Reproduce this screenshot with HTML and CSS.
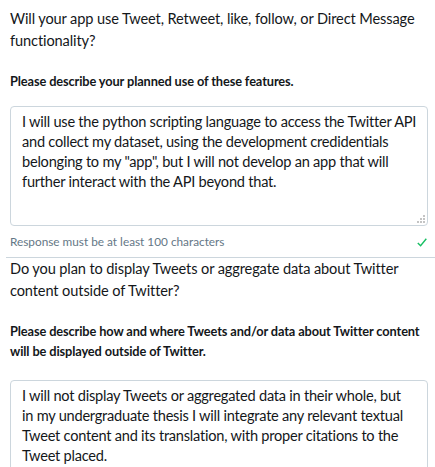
FILE: index.html
```html
<!DOCTYPE html>
<html lang="en">
<head>
<meta charset="utf-8">
<link rel="stylesheet" href="styles.css">
</head>
<body>
<div class="page">
  <section class="field">
    <p class="question">Will your app use Tweet, Retweet, like, follow, or Direct Message functionality?</p>
    <p class="prompt">Please describe your planned use of these features.</p>
    <div class="textarea tall">I will use the python scripting language to access the Twitter API<br>and collect my dataset, using the development credidentials<br>belonging to my "app", but I will not develop an app that will<br>further interact with the API beyond that.
      <svg class="grip" width="9" height="9" viewBox="0 0 9 9"><rect x="7" y="1" width="2" height="2"/><rect x="4" y="4" width="2" height="2"/><rect x="7" y="4" width="2" height="2"/><rect x="1" y="7" width="2" height="2"/><rect x="4" y="7" width="2" height="2"/><rect x="7" y="7" width="2" height="2"/></svg>
    </div>
    <div class="helper">
      <span>Response must be at least 100 characters</span>
      <svg class="check" width="10" height="9" viewBox="0 0 10 9"><polyline points="0.8,5 3.6,7.8 9.3,0.8" fill="none" stroke="#17bf63" stroke-width="1.4"/></svg>
    </div>
  </section>
  <hr class="divider">
  <section class="field">
    <p class="question">Do you plan to display Tweets or aggregate data about Twitter content outside of Twitter?</p>
    <p class="prompt">Please describe how and where Tweets and/or data about Twitter content will be displayed outside of Twitter.</p>
    <div class="textarea">I will not display Tweets or aggregated data in their whole, but<br>in my undergraduate thesis I will integrate any relevant textual<br>Tweet content and its translation, with proper citations to the<br>Tweet placed.</div>
  </section>
</div>
</body>
</html>
```
FILE: styles.css
```css
html, body {
  margin: 0;
  padding: 0;
  background: #ffffff;
}
body {
  font-family: Lato, "Noto Sans", sans-serif;
  color: #14171a;
  overflow: hidden;
}
.page {
  padding: 8px 7px 0 10px;
}
.field {
  display: flex;
  flex-direction: column;
}
.question {
  margin: 0;
  font-size: 14.6px;
  letter-spacing: -0.12px;
  line-height: 22px;
}
.prompt {
  margin: 19px 0 0;
  font-size: 12.8px;
  letter-spacing: -0.12px;
  font-weight: 700;
  line-height: 20px;
}
.textarea {
  position: relative;
  margin-top: 15px;
  border: 1px solid #ccd6dd;
  border-radius: 4px;
  padding: 5px 11px;
  font-size: 14.6px;
  letter-spacing: -0.24px;
  line-height: 20px;
  height: 108px;
  white-space: nowrap;
}
.field:last-child .textarea {
  margin-top: 19px;
  height: 120px;
}
.grip {
  position: absolute;
  right: 2px;
  bottom: 2px;
  fill: #c4c4c4;
}
.helper {
  display: flex;
  justify-content: space-between;
  align-items: center;
  margin-top: 7px;
  font-size: 11.8px;
  line-height: 18px;
  color: #657786;
}
.check {
  margin-right: 1px;
}
.divider {
  margin: 6px -7px 0 -4px;
  border: 0;
  border-top: 1px solid #ccd6dd;
  height: 0;
}
```
